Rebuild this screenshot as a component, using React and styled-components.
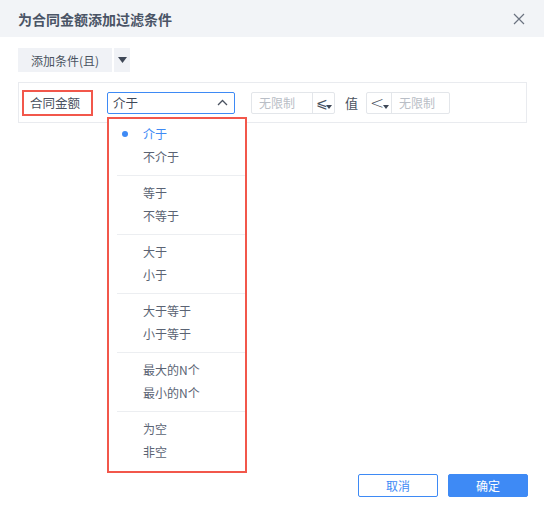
import React from 'react'
import styled, { createGlobalStyle } from 'styled-components'

const GlobalStyle = createGlobalStyle`
  html, body {
    margin: 0;
    padding: 0;
    background: #ffffff;
  }
  body {
    font-family: "Noto Sans CJK SC", "Noto Sans", sans-serif;
    color: #4a5260;
  }
`

const Dialog = styled.div`
  width: 544px;
  height: 506px;
  display: flex;
  flex-direction: column;
  background: #fff;
`

const Header = styled.div`
  height: 37px;
  flex: 0 0 37px;
  background: #f2f4f7;
  display: flex;
  align-items: center;
  justify-content: space-between;
  padding: 0 19px 0 18px;
`

const Title = styled.div`
  font-size: 14px;
  font-weight: bold;
  color: #4a5466;
`

const Close = styled.button`
  border: none;
  background: none;
  padding: 0;
  width: 12px;
  height: 12px;
  display: flex;
  cursor: pointer;
`

const Body = styled.div`
  flex: 1;
  padding: 11px 17px 0 18px;
`

const Toolbar = styled.div`
  display: flex;
  gap: 2px;
  height: 24px;
`

const AddBtn = styled.button`
  border: none;
  background: #f0f2f6;
  height: 24px;
  width: ${p => p.$w}px;
  padding: 0;
  font-family: inherit;
  font-size: 12px;
  color: #4a5260;
  display: flex;
  align-items: center;
  justify-content: center;
`

const FilterRow = styled.div`
  margin-top: 10px;
  height: 39px;
  border: 1px solid #e9ebef;
  display: flex;
  align-items: center;
  padding-left: 3px;
`

const FieldLabel = styled.div`
  box-sizing: border-box;
  width: 71px;
  height: 26px;
  border: 2px solid #f2574b;
  font-size: 12.5px;
  color: #4a5260;
  display: flex;
  align-items: center;
  padding-left: 6px;
`

const SelectWrap = styled.div`
  position: relative;
  margin-left: 14px;
`

const Select = styled.div`
  box-sizing: border-box;
  width: 128px;
  height: 22px;
  border: 1px solid #3e8af5;
  border-radius: 2px;
  display: flex;
  align-items: center;
  justify-content: space-between;
  padding: 0 6px 0 5px;
  font-size: 12.5px;
  color: #3f4857;
`

const Menu = styled.div`
  position: absolute;
  left: 0;
  top: 25px;
  box-sizing: border-box;
  width: 140px;
  border: 2px solid #f2574b;
  background: #fff;
  padding: 3px 0 8px;
  z-index: 2;
`

const Item = styled.div`
  position: relative;
  height: 23px;
  line-height: 23px;
  padding-left: 34px;
  font-size: 12px;
  color: ${p => (p.$active ? '#3e8af5' : '#5a6373')};

  &::before {
    content: '';
    display: ${p => (p.$active ? 'block' : 'none')};
    position: absolute;
    left: 13px;
    top: 9px;
    width: 6px;
    height: 6px;
    border-radius: 50%;
    background: #3e8af5;
  }
`

const Divider = styled.div`
  height: 1px;
  background: #eceef1;
  margin: 7px 0 5px 8px;
`

const RangeInput = styled.div`
  box-sizing: border-box;
  height: 22px;
  width: 84px;
  border: 1px solid #e3e6ea;
  border-radius: 2px;
  display: flex;
  flex-direction: ${p => (p.$reverse ? 'row-reverse' : 'row')};
  margin-left: ${p => p.$ml}px;
`

const Placeholder = styled.div`
  flex: 1;
  font-size: 12px;
  color: #b9bec6;
  display: flex;
  align-items: center;
  padding-left: 7px;
`

const Operator = styled.div`
  position: relative;
  width: ${p => p.$w}px;
  box-sizing: border-box;
  border-${p => (p.$reverse ? 'right' : 'left')}: 1px solid #e3e6ea;
  display: flex;
  align-items: center;
  padding-left: 3px;
  font-family: "DejaVu Sans", sans-serif;
  font-weight: 300;
  font-size: ${p => p.$size}px;
  color: #4a5260;

  &::after {
    content: '';
    position: absolute;
    right: 2px;
    bottom: 4px;
    border-left: 3.5px solid transparent;
    border-right: 3.5px solid transparent;
    border-top: 4px solid #3f4857;
  }
`

const ValueLabel = styled.div`
  margin-left: 10px;
  font-size: 13px;
  color: #4a5260;
`

const Footer = styled.div`
  display: flex;
  justify-content: flex-end;
  gap: 10px;
  padding: 0 16px 9px 0;
`

const FooterBtn = styled.button`
  box-sizing: border-box;
  width: 80px;
  height: 23px;
  border-radius: 2px;
  border: 1px solid #3e8af5;
  background: ${p => (p.$primary ? '#3e8af5' : '#fff')};
  color: ${p => (p.$primary ? '#fff' : '#3e8af5')};
  font-family: inherit;
  font-size: 12px;
  padding: 0;
`

const groups = [
  ['介于', '不介于'],
  ['等于', '不等于'],
  ['大于', '小于'],
  ['大于等于', '小于等于'],
  ['最大的N个', '最小的N个'],
  ['为空', '非空'],
]

export default function App() {
  return (
    <Dialog>
      <GlobalStyle />
      <Header>
        <Title>为合同金额添加过滤条件</Title>
        <Close>
          <svg width="12" height="12" viewBox="0 0 12 12">
            <path d="M1 1 L11 11 M11 1 L1 11" stroke="#6b7380" strokeWidth="1.2" />
          </svg>
        </Close>
      </Header>
      <Body>
        <Toolbar>
          <AddBtn $w={94}>添加条件(且)</AddBtn>
          <AddBtn $w={16}>
            <svg width="9" height="6" viewBox="0 0 9 6">
              <path d="M0 0 L9 0 L4.5 6 Z" fill="#3f4857" />
            </svg>
          </AddBtn>
        </Toolbar>
        <FilterRow>
          <FieldLabel>合同金额</FieldLabel>
          <SelectWrap>
            <Select>
              <span>介于</span>
              <svg width="11" height="7" viewBox="0 0 11 7">
                <path d="M1 6 L5.5 1.5 L10 6" stroke="#4a5260" strokeWidth="1.3" fill="none" />
              </svg>
            </Select>
            <Menu>
              {groups.map((g, gi) => (
                <React.Fragment key={gi}>
                  {gi > 0 && <Divider />}
                  {g.map((t, ti) => (
                    <Item key={t} $active={gi === 0 && ti === 0}>{t}</Item>
                  ))}
                </React.Fragment>
              ))}
            </Menu>
          </SelectWrap>
          <RangeInput $ml={16}>
            <Placeholder>无限制</Placeholder>
            <Operator $w={22} $size={14}>⩽</Operator>
          </RangeInput>
          <ValueLabel>值</ValueLabel>
          <RangeInput $ml={8} $reverse>
            <Placeholder>无限制</Placeholder>
            <Operator $w={25} $size={17} $reverse>&lt;</Operator>
          </RangeInput>
        </FilterRow>
      </Body>
      <Footer>
        <FooterBtn>取消</FooterBtn>
        <FooterBtn $primary>确定</FooterBtn>
      </Footer>
    </Dialog>
  )
}
